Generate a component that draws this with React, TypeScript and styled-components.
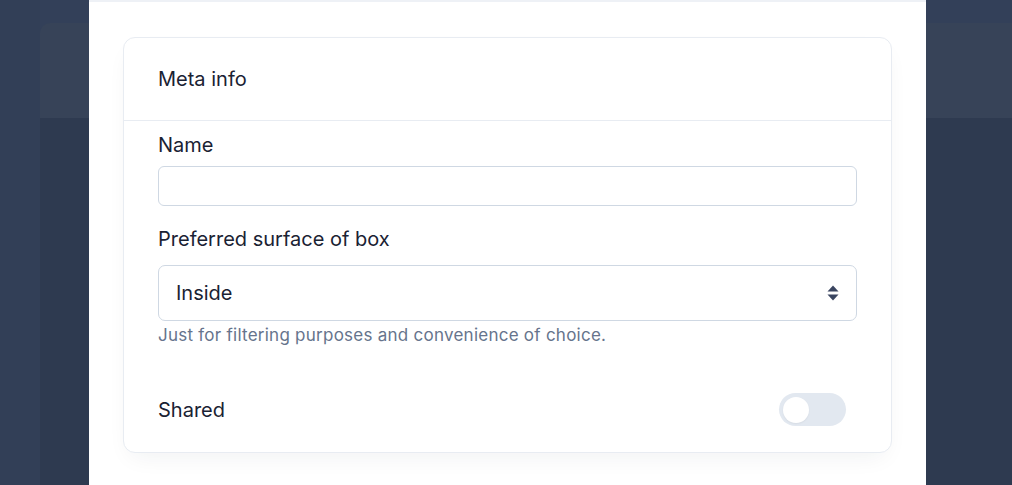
import React, { useState } from "react";
import styled, { createGlobalStyle } from "styled-components";

const GlobalStyle = createGlobalStyle`
  html, body {
    margin: 0;
    padding: 0;
    height: 100%;
    overflow: hidden;
    background: #334059;
    font-family: Inter, "Noto Sans", "Liberation Sans", sans-serif;
  }
  * { box-sizing: border-box; }
`;

const Page = styled.div`
  display: grid;
  grid-template-columns: 40px 1fr;
  height: 485px;
  background: #334059;
`;

const Side = styled.div`
  background: #323f57;
`;

const Main = styled.div`
  display: flex;
  flex-direction: column;
  padding-top: 23px;
`;

const TopCard = styled.div`
  height: 95px;
  background: #374358;
  border-top-left-radius: 10px;
`;

const Content = styled.div`
  flex: 1;
  background: #2e3a50;
`;

const Modal = styled.div`
  position: fixed;
  top: -50px;
  left: 89px;
  width: 837px;
  height: 600px;
  background: #ffffff;
  display: flex;
  flex-direction: column;
`;

const ModalHeader = styled.div`
  height: 52px;
  border-bottom: 2px solid #eef1f6;
`;

const ModalBody = styled.div`
  padding: 35px 34px;
`;

const Card = styled.section`
  border: 1px solid #e8ecf2;
  border-radius: 12px;
  background: #fff;
  box-shadow: 0 10px 25px -8px rgba(30, 41, 59, 0.07);
`;

const CardHeader = styled.h3`
  margin: 0;
  padding: 27px 34px;
  font-size: 20px;
  line-height: 28px;
  font-weight: 400;
  color: #1a2233;
  border-bottom: 1px solid #e8ecf2;
`;

const CardBody = styled.div`
  padding: 10px 34px 26px;
  display: flex;
  flex-direction: column;
`;

const Label = styled.label<{ $gap?: number }>`
  display: block;
  font-size: 20px;
  line-height: 28px;
  color: #1a2233;
  margin-top: ${(p) => p.$gap ?? 0}px;
  margin-bottom: ${(p) => (p.$gap ? 12 : 7)}px;
`;

const Input = styled.input`
  display: block;
  width: 100%;
  height: 40px;
  border: 1px solid #cfd8e3;
  border-radius: 6px;
  padding: 0 16px;
  font: inherit;
  font-size: 18px;
  outline: none;
`;

const SelectWrap = styled.div`
  position: relative;
`;

const Select = styled.select`
  display: block;
  width: 100%;
  height: 56px;
  border: 1px solid #cfd8e3;
  border-radius: 7px;
  padding: 0 40px 0 17px;
  font: inherit;
  font-size: 20px;
  color: #1a2233;
  background: #fff;
  appearance: none;
  outline: none;
`;

const Arrows = styled.svg`
  position: absolute;
  right: 18px;
  top: 50%;
  transform: translateY(-50%);
  pointer-events: none;
`;

const Help = styled.p`
  margin: 2px 0 0;
  font-size: 17px;
  line-height: 24px;
  color: #66748c;
  letter-spacing: 0.25px;
`;

const Row = styled.div`
  display: flex;
  align-items: center;
  justify-content: space-between;
  margin-top: 46px;
  padding-right: 11px;
`;

const RowLabel = styled.span`
  font-size: 20px;
  line-height: 28px;
  color: #1a2233;
`;

const Toggle = styled.button<{ $on: boolean }>`
  width: 67px;
  height: 33px;
  border: none;
  border-radius: 17px;
  padding: 0 4px;
  background: ${(p) => (p.$on ? "#4f6bed" : "#e2e8f0")};
  display: flex;
  align-items: center;
  justify-content: ${(p) => (p.$on ? "flex-end" : "flex-start")};
  cursor: pointer;
`;

const Knob = styled.span`
  width: 26px;
  height: 26px;
  border-radius: 50%;
  background: #fff;
  box-shadow: 0 1px 2px rgba(0, 0, 0, 0.05);
`;

export default function App() {
  const [shared, setShared] = useState(false);
  return (
    <>
      <GlobalStyle />
      <Page>
        <Side />
        <Main>
          <TopCard />
          <Content />
        </Main>
      </Page>
      <Modal>
        <ModalHeader />
        <ModalBody>
          <Card>
            <CardHeader>Meta info</CardHeader>
            <CardBody>
              <Label htmlFor="name">Name</Label>
              <Input id="name" />
              <Label htmlFor="surface" $gap={19}>
                Preferred surface of box
              </Label>
              <SelectWrap>
                <Select id="surface" defaultValue="inside">
                  <option value="inside">Inside</option>
                  <option value="outside">Outside</option>
                </Select>
                <Arrows width="12" height="16" viewBox="0 0 12 16">
                  <path d="M6 0.5 L11.5 6.5 H0.5 Z" fill="#3a4560" />
                  <path d="M6 15.5 L11.5 9.5 H0.5 Z" fill="#3a4560" />
                </Arrows>
              </SelectWrap>
              <Help>Just for filtering purposes and convenience of choice.</Help>
              <Row>
                <RowLabel>Shared</RowLabel>
                <Toggle $on={shared} onClick={() => setShared(!shared)}>
                  <Knob />
                </Toggle>
              </Row>
            </CardBody>
          </Card>
        </ModalBody>
      </Modal>
    </>
  );
}
